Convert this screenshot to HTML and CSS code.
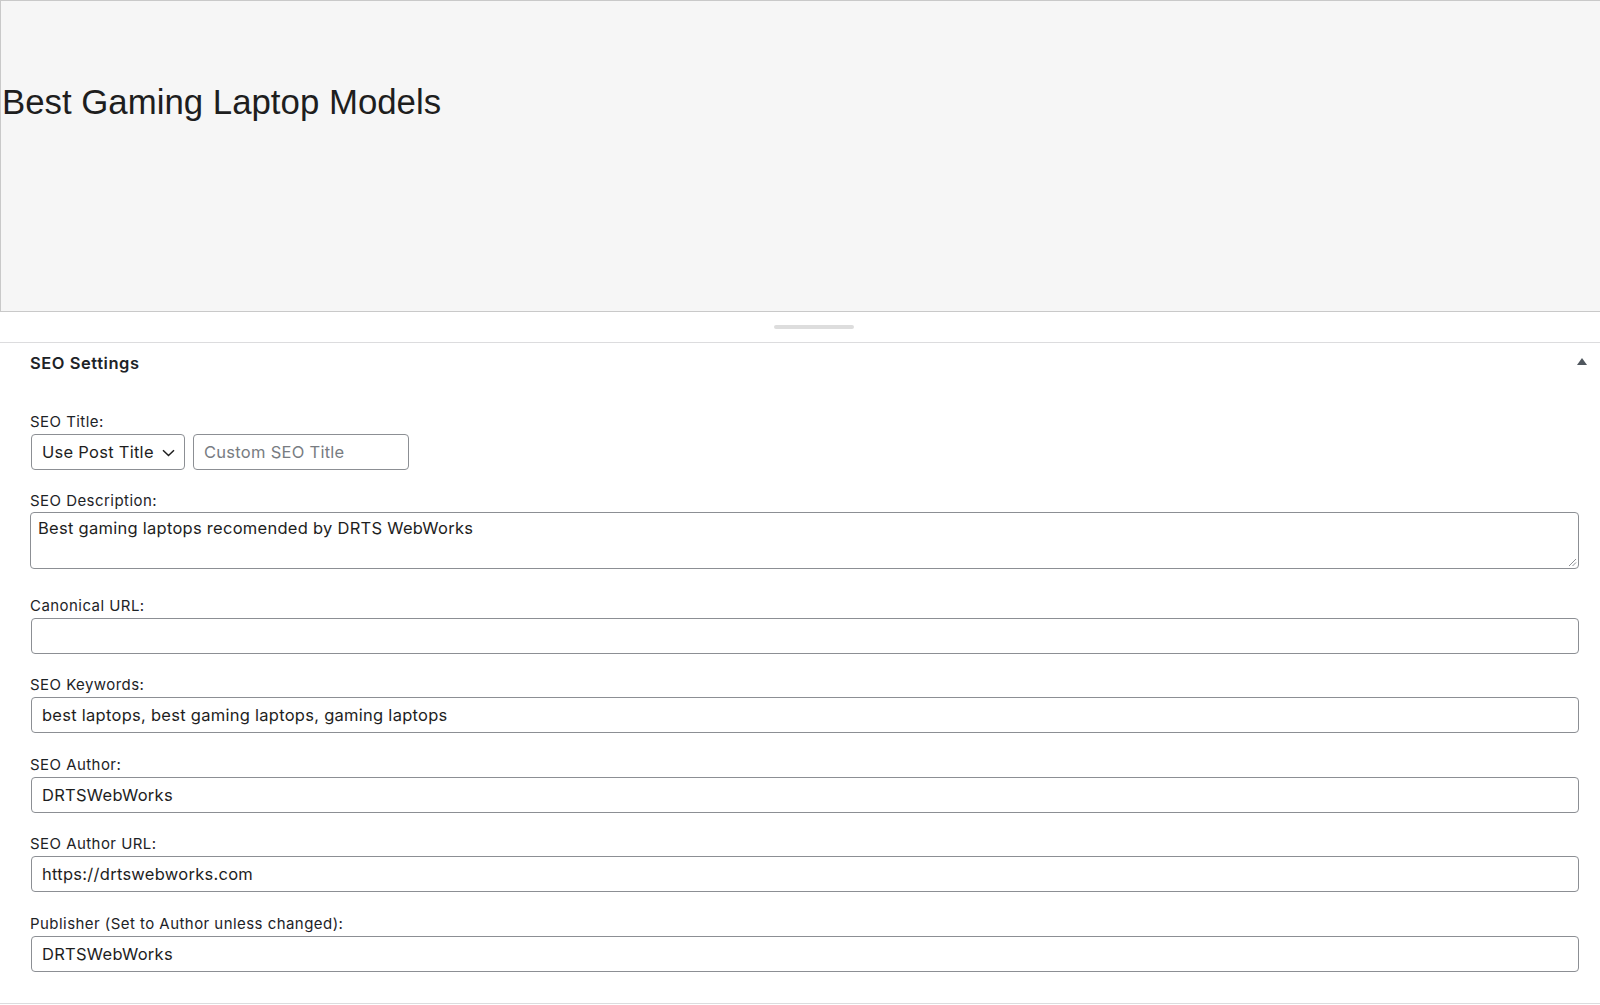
FILE: index.html
```html
<!DOCTYPE html>
<html>
<head>
<meta charset="utf-8">
<link rel="stylesheet" href="styles.css">
</head>
<body>
<div class="preview">
  <h1 class="preview-title">Best Gaming Laptop Models</h1>
</div>
<div class="resizer"><div class="resizer-handle"></div></div>
<div class="panel">
  <div class="panel-header">
    <h2 class="panel-title">SEO Settings</h2>
    <span class="panel-toggle"></span>
  </div>
  <div class="panel-body">
    <div class="field field-title">
      <label class="field-label">SEO Title:</label>
      <div class="title-row">
        <div class="select">
          <span>Use Post Title</span>
          <svg class="chevron" width="13" height="8" viewBox="0 0 13 8"><path d="M1 1.2 L6.5 6.5 L12 1.2" fill="none" stroke="#1e1e1e" stroke-width="1.5"/></svg>
        </div>
        <div class="input input-small placeholder">Custom SEO Title</div>
      </div>
    </div>
    <div class="field field-desc">
      <label class="field-label field-label-tight">SEO Description:</label>
      <div class="textarea">Best gaming laptops recomended by DRTS WebWorks
        <svg class="grip" width="10" height="10" viewBox="0 0 10 10"><path d="M9 2 L2 9 M9 5.5 L5.5 9" stroke="#8c8f94" stroke-width="1"/></svg>
      </div>
    </div>
    <div class="field">
      <label class="field-label">Canonical URL:</label>
      <div class="input"></div>
    </div>
    <div class="field">
      <label class="field-label">SEO Keywords:</label>
      <div class="input">best laptops, best gaming laptops, gaming laptops</div>
    </div>
    <div class="field">
      <label class="field-label">SEO Author:</label>
      <div class="input">DRTSWebWorks</div>
    </div>
    <div class="field">
      <label class="field-label">SEO Author URL:</label>
      <div class="input">https://drtswebworks.com</div>
    </div>
    <div class="field">
      <label class="field-label">Publisher (Set to Author unless changed):</label>
      <div class="input">DRTSWebWorks</div>
    </div>
  </div>
</div>
</body>
</html>
```

FILE: styles.css
```css
html, body {
  margin: 0;
  padding: 0;
  background: #fff;
}
body {
  width: 1600px;
  height: 1005px;
  overflow: hidden;
  font-family: Inter, "Noto Sans", sans-serif;
  color: #1d2327;
}
.preview {
  box-sizing: border-box;
  height: 312px;
  background: #f6f6f6;
  border: 1px solid #c9c9c9;
  border-right: none;
  padding: 83px 0 0 1px;
}
.preview-title {
  margin: 0;
  font-family: "Liberation Sans", Arial, sans-serif;
  font-weight: 400;
  font-size: 34.8px;
  line-height: 36px;
  color: #1e1e1e;
}
.resizer {
  box-sizing: border-box;
  height: 31px;
  border-bottom: 1px solid #dcdcde;
  padding-top: 13px;
}
.resizer-handle {
  width: 80px;
  height: 4px;
  border-radius: 2px;
  background: #dddddd;
  margin-left: 774px;
}
.panel {
  box-sizing: border-box;
  height: 661px;
  border-bottom: 1px solid #dcdcde;
}
.panel-header {
  display: flex;
  align-items: center;
  justify-content: space-between;
  height: 40px;
  padding: 0 13px 0 30px;
}
.panel-title {
  margin: 0;
  font-size: 16.5px;
  font-weight: 600;
  color: #1d2327;
  letter-spacing: 0.55px;
}
.panel-toggle {
  width: 0;
  height: 0;
  border-left: 5px solid transparent;
  border-right: 5px solid transparent;
  border-bottom: 7px solid #50575e;
  margin-top: -4px;
}
.panel-body {
  padding: 30px 21px 0 30px;
}
.field {
  margin-bottom: 22.5px;
}
.field-title {
  margin-bottom: 21.5px;
}
.field-desc {
  margin-bottom: 28px;
}
.field-label {
  display: block;
  font-size: 15px;
  line-height: 18px;
  margin-bottom: 3px;
  letter-spacing: 0.45px;
  color: #1d2327;
}
.field-label-tight {
  margin-bottom: 2px;
}
.title-row {
  display: flex;
  gap: 8px;
  padding-left: 1px;
}
.select {
  box-sizing: border-box;
  width: 154px;
  height: 36px;
  border: 1px solid #8c8f94;
  border-radius: 4px;
  display: flex;
  align-items: center;
  justify-content: space-between;
  padding: 0 9px 0 10px;
  font-size: 16.5px;
  letter-spacing: 0.27px;
  color: #1e1e1e;
}
.chevron {
  margin-top: 1px;
}
.input {
  box-sizing: border-box;
  height: 36px;
  margin-left: 1px;
  border: 1px solid #8c8f94;
  border-radius: 4px;
  padding: 0 10px;
  display: flex;
  align-items: center;
  font-size: 16.5px;
  letter-spacing: 0.27px;
  color: #1e1e1e;
}
.title-row .input {
  margin-left: 0;
}
.input-small {
  width: 216px;
}
.placeholder {
  color: #787c82;
}
.textarea {
  position: relative;
  box-sizing: border-box;
  height: 57px;
  border: 1px solid #8c8f94;
  border-radius: 4px;
  padding: 5px 7px;
  font-size: 16.5px;
  line-height: 20px;
  letter-spacing: 0.27px;
  color: #1e1e1e;
}
.grip {
  position: absolute;
  right: 1px;
  bottom: 1px;
}
```
